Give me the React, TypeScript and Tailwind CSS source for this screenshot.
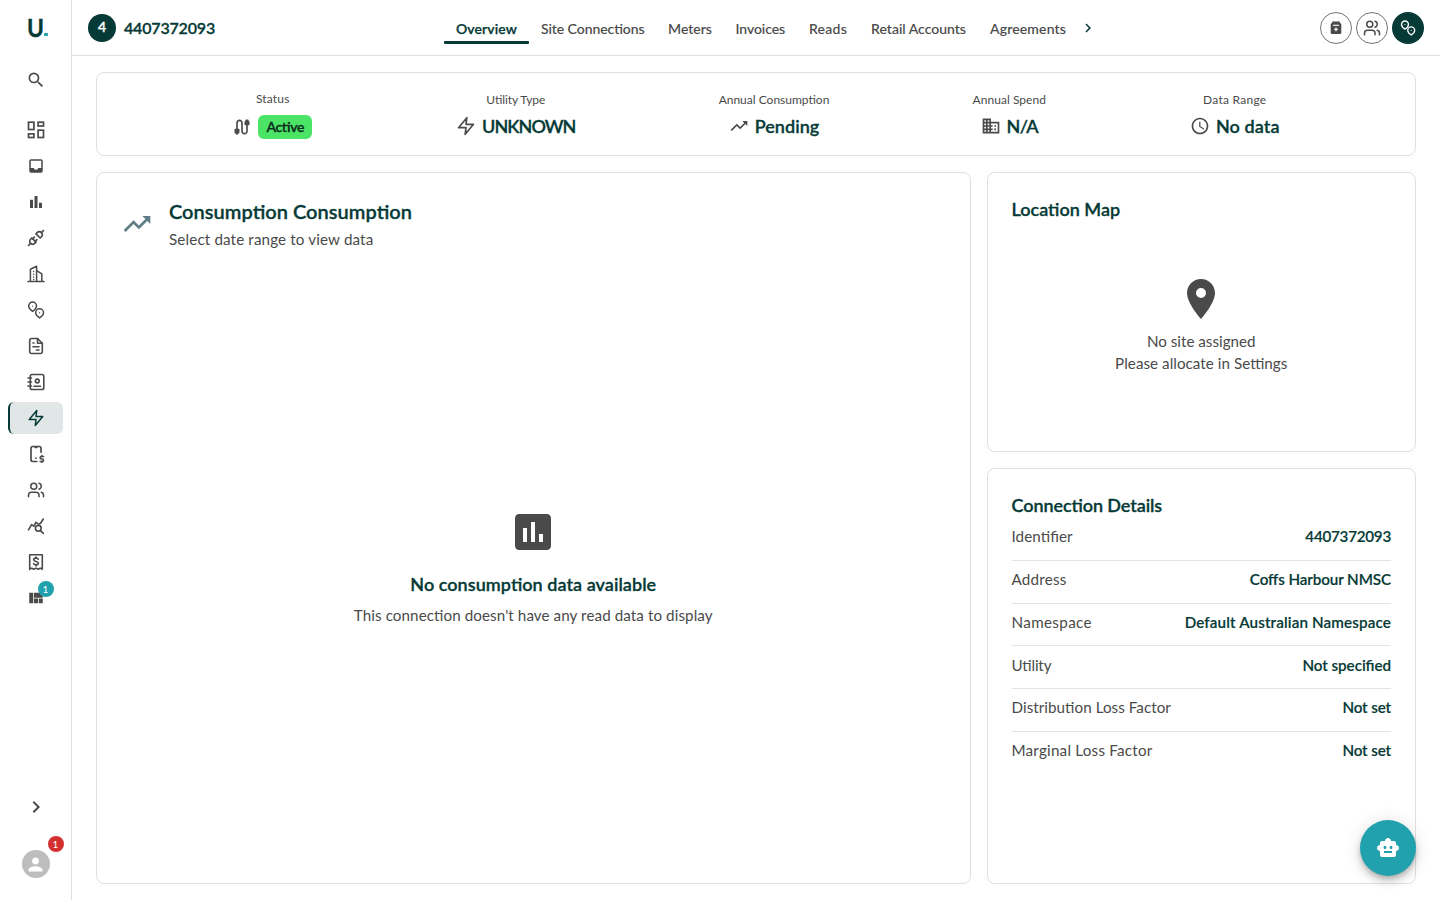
import type { ReactNode } from 'react'
import {
  MdSearch, MdViewQuilt, MdChevronRight, MdPerson, MdCable, MdTrendingUp,
  MdBusiness, MdAccessTime, MdLocationOn, MdAssessment, MdSmartToy,
} from 'react-icons/md'
import { TbPlugConnected, TbDeviceMobileDollar } from 'react-icons/tb'
import { Users } from 'lucide-react'

function Svg({ size = 18, box = 18, stroke = 1.6, children }: { size?: number; box?: number; stroke?: number; children: ReactNode }) {
  return (
    <svg
      width={size}
      height={size}
      viewBox={`0 0 ${box} ${box}`}
      fill="none"
      stroke="currentColor"
      strokeWidth={stroke}
      strokeLinecap="round"
      strokeLinejoin="round"
      className="shrink-0"
    >
      {children}
    </svg>
  )
}

const DashboardIcon = () => (
  <Svg stroke={1.7}>
    <g strokeLinejoin="miter">
      <rect x="1.5" y="1.2" width="5.4" height="7.3" />
      <rect x="11.1" y="1.2" width="5.4" height="3.8" />
      <rect x="1.5" y="12.9" width="5.4" height="3.6" />
      <rect x="11.1" y="9.2" width="5.4" height="7.3" />
    </g>
  </Svg>
)

const InboxIcon = () => (
  <Svg stroke={1.5}>
    <rect x="3" y="3" width="12" height="12" rx="1" />
    <path d="M3 11.5h3.6c.4 1 1.3 1.700 2.400 1.700s2-.7 2.400-1.700H15V15H3z" fill="currentColor" stroke="none" />
    <path d="M3 11.500h3.300c.4 1.100 1.400 1.900 2.700 1.900s2.300-.8 2.700-1.900H15" strokeWidth="1.200" />
  </Svg>
)

const BarsIcon = () => (
  <svg width="18" height="18" viewBox="0 0 24 24" fill="currentColor">
    <path d="M4 9h4v11H4zm12 4h4v7h-4zm-6-9h4v16h-4z" />
  </svg>
)

const BuildingsIcon = () => (
  <Svg stroke={1.5}>
    <path d="M1 16.5h16M3.4 16.2V4.2L9.6 1.3v14.9M9.6 5.6l5.2 3.2v7.4" />
    <path d="M6.6 6.5v.1M6.6 9.2v.1M6.6 11.9v.1M6.6 14.4v.1" />
  </Svg>
)

const PinsIcon = ({ size = 18 }: { size?: number }) => (
  <Svg size={size} stroke={1.5}>
    <path d="M5.6 10.3C3.6 8.9 1.7 7.3 1.7 5a3.9 3.9 0 0 1 7.8 0c0 2.3-1.9 3.9-3.9 5.3z" />
    <path d="M12.6 16.9c-2-1.4-3.9-3-3.9-5.2a3.9 3.9 0 0 1 7.8 0c0 2.2-1.9 3.8-3.9 5.2z" />
    <path d="M5.6 5v.1M12.6 11.7v.1" strokeWidth="1.2" />
  </Svg>
)

const DocumentIcon = () => (
  <Svg>
    <path d="M10.5 1.5h-6a1.8 1.8 0 0 0-1.8 1.8v11.4a1.8 1.8 0 0 0 1.8 1.8h9a1.8 1.8 0 0 0 1.8-1.8V6.2z" />
    <path d="M10.5 1.5v4.7h4.8M6 9.8h6M9.5 13h2.5M6 6h1" />
  </Svg>
)

const ContactsIcon = () => (
  <Svg>
    <rect x="3.3" y="1.5" width="13.5" height="15" rx="1.8" />
    <path d="M1 5h3.5M1 9h3.5M1 13h3.5M7 13.2h6.5" />
    <circle cx="10.3" cy="8" r="1.9" />
  </Svg>
)

const ZapIcon = ({ size = 18 }: { size?: number }) => (
  <Svg size={size} box={24} stroke={2}>
    <path d="M13 2L3 14h9l-1 8 10-12h-9l1-8z" />
  </Svg>
)

const ChartSearchIcon = () => (
  <Svg>
    <path d="M1.5 12.8l3-5.2 2.300 1.600 2.100-3.800 2 1.300M12.200 6.900l1.400-.6L16.300 2" />
    <circle cx="11.3" cy="11.3" r="2.9" />
    <path d="M13.5 13.6l2.8 2.8" />
  </Svg>
)

const ReceiptIcon = () => (
  <Svg>
    <path d="M2.7 16.3V1.7h12.6v14.6l-2-1.2-2.1 1.2L9 15.1l-2.2 1.2-2.1-1.2z" />
    <path d="M11.3 6.2c-.4-.8-1.2-1.1-2.3-1.1-1.4 0-2.3.6-2.3 1.6 0 2.4 4.7 1.1 4.7 3.5 0 1-.9 1.6-2.4 1.6-1.2 0-2-.4-2.4-1.2M9 4v1.1M9 11.9v1" />
  </Svg>
)

const ClipboardPlusIcon = () => (
  <svg width="18" height="18" viewBox="0 0 18 18" fill="currentColor">
    <path d="M5.2 2.5h1V4h5.6V2.5h1V4c.9.1 1.5.7 1.5 1.6v7.8c0 1-.7 1.7-1.7 1.7H5.4c-1 0-1.7-.7-1.7-1.7V5.6c0-.9.6-1.5 1.5-1.6z" />
    <path d="M6 3.3h6" stroke="currentColor" strokeWidth="1.6" />
    <path d="M6 6.3h6" stroke="white" strokeWidth="1.1" />
    <path d="M9 8.6v3.6M7.2 10.4h3.6" stroke="white" strokeWidth="1.3" />
  </svg>
)

const navItems = [
  { id: 'dashboard', icon: <DashboardIcon /> },
  { id: 'inbox', icon: <InboxIcon /> },
  { id: 'reports', icon: <BarsIcon /> },
  { id: 'plugs', icon: <TbPlugConnected size={20} strokeWidth={2} /> },
  { id: 'buildings', icon: <BuildingsIcon /> },
  { id: 'sites', icon: <PinsIcon /> },
  { id: 'documents', icon: <DocumentIcon /> },
  { id: 'contacts', icon: <ContactsIcon /> },
  { id: 'connections', icon: <ZapIcon />, active: true },
  { id: 'billing', icon: <TbDeviceMobileDollar size={20} strokeWidth={2} /> },
  { id: 'users', icon: <Users size={18} strokeWidth={2} /> },
  { id: 'analysis', icon: <ChartSearchIcon /> },
  { id: 'receipts', icon: <ReceiptIcon /> },
  { id: 'boards', icon: <MdViewQuilt size={18} />, badge: '1' },
]

const tabs = [
  { label: 'Overview', className: 'w-[85px] font-semibold text-[#063a36] tracking-[0.1px] [-webkit-text-stroke:0.25px]', active: true },
  { label: 'Site Connections', className: 'w-[127.5px] tracking-[-0.06px]' },
  { label: 'Meters', className: 'w-[67px]' },
  { label: 'Invoices', className: 'w-[73.5px] tracking-[-0.06px]' },
  { label: 'Reads', className: 'w-[62px] tracking-[0.26px]' },
  { label: 'Retail Accounts', className: 'w-[119px]' },
  { label: 'Agreements', className: 'w-[100px] tracking-[0.16px]' },
]

const stats = [
  { label: 'Utility Type', value: 'UNKNOWN', icon: <ZapIcon size={20} />, cell: 'w-[119px]', labelClass: 'tracking-[-0.1px]', valueClass: 'tracking-[-0.95px]' },
  { label: 'Annual Consumption', value: 'Pending', icon: <MdTrendingUp size={20} />, cell: 'w-[109.5px]', labelClass: '', valueClass: 'tracking-[0.05px]' },
  { label: 'Annual Spend', value: 'N/A', icon: <MdBusiness size={20} />, cell: 'w-[73px]', labelClass: 'tracking-[0.05px]', valueClass: 'tracking-[-0.7px]' },
  { label: 'Data Range', value: 'No data', icon: <MdAccessTime size={20} />, cell: 'w-[90px]', labelClass: 'tracking-[0.27px]', valueClass: 'tracking-[0.08px]' },
]

const details = [
  { label: 'Identifier', value: '4407372093', labelClass: 'tracking-[0.09px]', valueClass: 'tracking-[-0.24px]' },
  { label: 'Address', value: 'Coffs Harbour NMSC', labelClass: 'tracking-[0.21px]', valueClass: 'tracking-[-0.1px]' },
  { label: 'Namespace', value: 'Default Australian Namespace', labelClass: 'tracking-[0.36px]', valueClass: 'tracking-[0.13px]' },
  { label: 'Utility', value: 'Not specified', labelClass: 'tracking-[-0.18px]', valueClass: 'tracking-[-0.05px]' },
  { label: 'Distribution Loss Factor', value: 'Not set', labelClass: 'tracking-[0.05px]', valueClass: 'tracking-[-0.12px]' },
  { label: 'Marginal Loss Factor', value: 'Not set', labelClass: 'tracking-[0.22px]', valueClass: 'tracking-[-0.12px]' },
]

const card = 'rounded-lg border border-[#e0e0e0]'
const strong = 'font-semibold [-webkit-text-stroke:0.3px]'

function Sidebar() {
  return (
    <aside className="flex w-[72px] shrink-0 flex-col border-r border-[#e0e0e0]">
      <div className="flex h-14 items-center pl-[26.5px] text-2xl font-bold">
        <span className="w-[17.5px] origin-left scale-x-[0.95] leading-none [-webkit-text-stroke:0.4px]">U</span>
        <span className="mt-[13px] size-[3.5px] rounded-[1px] bg-[#21a0ad]" />
      </div>
      <div className="mt-2 flex h-8 items-center justify-center text-[#4a4a4a]">
        <MdSearch size={20} />
      </div>
      <nav className="mt-[18px] flex flex-col gap-1 px-2 text-[#4a4a4a]">
        {navItems.map((item) => (
          <div
            key={item.id}
            className={
              item.active
                ? 'flex h-8 items-center justify-center rounded-md border-l-2 border-[#063a36] bg-[#e1e7e7] pr-px text-[#063a36]'
                : 'relative flex h-8 items-center justify-center pl-px'
            }
          >
            {item.icon}
            {item.badge && (
              <span className="absolute right-[9.5px] -top-px flex size-4 items-center justify-center rounded-full bg-[#21a0ad] text-[10px] text-white">
                {item.badge}
              </span>
            )}
          </div>
        ))}
      </nav>
      <div className="mt-auto flex justify-center text-[#4a4a4a]">
        <MdChevronRight size={24} />
      </div>
      <div className="relative mt-[31px] mb-[22px] flex justify-center">
        <div className="flex size-7 items-center justify-center rounded-full bg-[#bdbdbd] text-white">
          <MdPerson size={21} />
        </div>
        <span className="absolute right-[7.5px] -top-[14px] flex size-4 items-center justify-center rounded-full bg-[#d32f2f] text-[10px] text-white">
          1
        </span>
      </div>
    </aside>
  )
}

function Header() {
  return (
    <header className="flex h-14 shrink-0 items-center border-b border-[#e0e0e0] px-4">
      <div className="flex w-[356px] items-center gap-2">
        <span className={`flex size-7 items-center justify-center rounded-full bg-[#063a36] pb-px text-sm text-white ${strong}`}>4</span>
        <span className={`text-base tracking-[-0.18px] ${strong}`}>4407372093</span>
      </div>
      <div className="mt-[11px] flex h-[33px] self-start text-sm font-medium text-[#4a4a4a] [-webkit-text-stroke:0.1px]">
        {tabs.map((tab) => (
          <div key={tab.label} className={`flex shrink-0 flex-col items-center whitespace-nowrap ${tab.className}`}>
            <span className="flex h-9 shrink-0 items-center leading-none">{tab.label}</span>
            {tab.active && <span className="-mt-[6px] h-[3px] w-full shrink-0 rounded-[1px] bg-[#063a36]" />}
          </div>
        ))}
      </div>
      <div className="pl-px">
        <MdChevronRight size={18} />
      </div>
      <div className="ml-auto flex gap-1 text-[#4a4a4a]">
        <div className="flex size-8 items-center justify-center rounded-full border border-[#757575]"><ClipboardPlusIcon /></div>
        <div className="flex size-8 items-center justify-center rounded-full border border-[#757575]"><Users size={18} strokeWidth={2} /></div>
        <div className="flex size-8 items-center justify-center rounded-full bg-[#063a36] text-white"><PinsIcon size={16} /></div>
      </div>
    </header>
  )
}

export default function App() {
  return (
    <div className="flex h-screen w-full overflow-hidden bg-white font-[Lato,sans-serif] text-[#063a36] [font-feature-settings:'liga'_1]">
      <Sidebar />
      <div className="flex min-w-0 flex-1 flex-col">
        <Header />
        <main className="flex flex-1 flex-col gap-4 px-6 py-4">
          {/* Summary stats */}
          <section className={`flex h-[84px] shrink-0 justify-center gap-36 pt-[17px] ${card}`}>
            <div className="flex w-20 flex-col items-center">
              <span className="h-5 pl-px text-xs leading-[18px] tracking-[0.15px] text-[#4a4a4a]">Status</span>
              <div className="mt-[3px] flex h-7 items-center gap-1.5">
                <MdCable size={20} className="text-[#4a4a4a]" />
                <span className={`flex h-6 w-[54px] items-center justify-center rounded-md bg-[#4be467] text-sm tracking-[-0.42px] text-[#0c2b1c] ${strong}`}>
                  Active
                </span>
              </div>
            </div>
            {stats.map((s) => (
              <div key={s.label} className={`flex flex-col items-center whitespace-nowrap ${s.cell}`}>
                <span className={`h-5 text-xs leading-5 text-[#4a4a4a] ${s.labelClass}`}>{s.label}</span>
                <div className="mt-0.5 flex h-7 items-center gap-1.5">
                  <span className="text-[#4a4a4a]">{s.icon}</span>
                  <span className={`pb-px text-lg ${strong} ${s.valueClass}`}>{s.value}</span>
                </div>
              </div>
            ))}
          </section>

          <div className="flex flex-1 gap-4">
            {/* Consumption */}
            <section className={`flex flex-1 flex-col px-6 pt-[23px] pb-6 ${card}`}>
              <div className="mb-6 flex items-center gap-4">
                <MdTrendingUp size={32} className="text-[#607d86]" />
                <div>
                  <h2 className={`text-xl leading-[30px] tracking-[0.03px] ${strong}`}>Consumption Consumption</h2>
                  <p className="mt-px text-[15.2px] leading-6 tracking-[0.14px] text-[#4a4a4a]">Select date range to view data</p>
                </div>
              </div>
              <div className="flex flex-1 flex-col items-center justify-center pt-px">
                <MdAssessment size={48} className="text-[#4a4a4a]" />
                <h3 className={`mt-[15px] text-lg leading-[26px] tracking-[0.05px] ${strong}`}>No consumption data available</h3>
                <p className="mt-1.5 text-[15.2px] leading-6 tracking-[0.08px] text-[#4a4a4a]">This connection doesn't have any read data to display</p>
              </div>
            </section>

            <div className="flex w-[429.5px] flex-col gap-4">
              {/* Location */}
              <section className={`flex h-[280px] flex-col px-6 pt-[23px] pb-6 ${card}`}>
                <h3 className={`text-lg leading-[26px] ${strong}`}>Location Map</h3>
                <div className="flex flex-1 flex-col items-center justify-center text-[#4a4a4a]">
                  <MdLocationOn size={48} />
                  <p className="mt-[7px] text-[15.2px] leading-[22px]">No site assigned</p>
                  <p className="text-[15.2px] leading-[22px] tracking-[0.04px]">Please allocate in Settings</p>
                </div>
              </section>

              {/* Connection details */}
              <section className={`flex flex-1 flex-col p-6 ${card}`}>
                <h3 className={`text-lg leading-[25px] tracking-[-0.08px] ${strong}`}>Connection Details</h3>
                {details.map((row) => (
                  <div
                    key={row.label}
                    className="flex h-[42.8px] justify-between border-b border-[#e4e4e4] pt-[7.3px] text-[15.2px] leading-[22.8px] last:border-b-0"
                  >
                    <span className={`text-[#4a4a4a] ${row.labelClass}`}>{row.label}</span>
                    <span className={`font-semibold [-webkit-text-stroke:0.15px] ${row.valueClass}`}>{row.value}</span>
                  </div>
                ))}
              </section>
            </div>
          </div>
        </main>
      </div>

      <button className="fixed right-6 bottom-6 flex size-14 items-center justify-center rounded-full bg-[#21a0ad] text-white shadow-[0_3px_5px_-1px_rgba(0,0,0,0.2),0_6px_10px_rgba(0,0,0,0.14),0_1px_18px_rgba(0,0,0,0.12)]">
        <MdSmartToy size={24} />
      </button>
    </div>
  )
}
